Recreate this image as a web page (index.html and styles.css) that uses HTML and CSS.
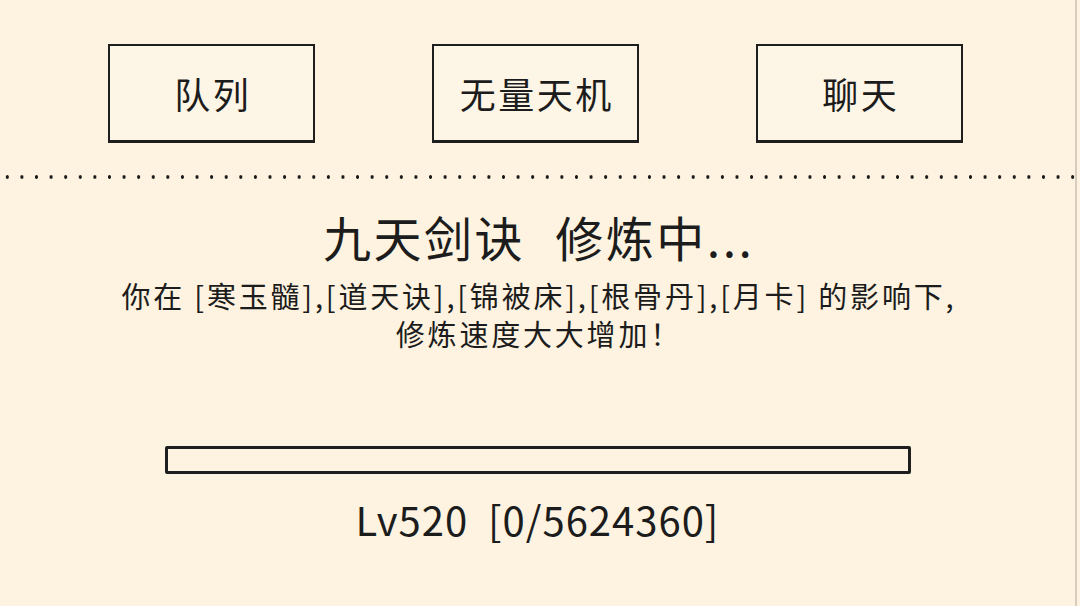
FILE: index.html
```html
<!DOCTYPE html>
<html lang="zh-CN">
<head>
<meta charset="utf-8">
<title>修炼</title>
<link rel="stylesheet" href="styles.css">
</head>
<body>
<div class="page">
  <nav class="tabs">
    <div class="tab">队列</div>
    <div class="tab">无量天机</div>
    <div class="tab">聊天</div>
  </nav>
  <div class="divider"></div>
  <main class="status">
    <h1 class="title">九天剑诀 修炼中...</h1>
    <p class="desc">你在 [寒玉髓],[道天诀],[锦被床],[根骨丹],[月卡] 的影响下,<br>修炼速度大大增加！</p>
    <div class="bar"><div class="bar-fill" style="width:0%"></div></div>
    <div class="level">Lv520&nbsp;&nbsp;[0/5624360]</div>
  </main>
</div>
</body>
</html>
```

FILE: styles.css
```css
html, body {
  margin: 0;
  padding: 0;
  background: #fdf3e0;
}
body {
  width: 1080px;
  height: 606px;
  overflow: hidden;
  font-family: "Noto Sans CJK SC", "Noto Sans", sans-serif;
  color: #1c1c1c;
}
.page {
  width: 1075px;
  height: 606px;
  border-right: 2px solid #d6cdbd;
  display: flex;
  flex-direction: column;
}
.tabs {
  display: flex;
  justify-content: center;
  gap: 117px;
  padding-top: 44px;
  padding-right: 4px;
}
.tab {
  width: 203px;
  height: 94px;
  border: 2px solid #1e1e1e;
  border-top-width: 2px;
  border-bottom-width: 3px;
  box-sizing: content-box;
  display: flex;
  align-items: center;
  justify-content: center;
  font-size: 36px;
  letter-spacing: 2.5px;
  text-indent: 2.5px;
  background: #fdf5e5;
}
.divider {
  margin-top: 32px;
  height: 4px;
  background-image: radial-gradient(circle, #1a1a1a 1.5px, transparent 2px);
  background-size: 14.6px 4px;
  background-repeat: repeat-x;
}
.status {
  display: flex;
  flex-direction: column;
  align-items: center;
}
.title {
  margin: 27px 0 0;
  font-size: 48px;
  font-weight: 400;
  line-height: 60px;
  letter-spacing: 2.5px;
  word-spacing: 17px;
  padding-left: 2.5px;
}
.desc {
  margin: 10px 0 0;
  font-size: 29px;
  line-height: 38px;
  letter-spacing: 2.8px;
  padding-left: 2.8px;
  text-align: center;
}
.bar {
  margin-top: 94px;
  width: 740px;
  height: 22px;
  border: 3px solid #1e1e1e;
  border-radius: 2px;
}
.bar-fill {
  height: 100%;
  background: #1e1e1e;
}
.level {
  margin-top: 23px;
  font-size: 40px;
  line-height: 44px;
  letter-spacing: 1px;
}
```
